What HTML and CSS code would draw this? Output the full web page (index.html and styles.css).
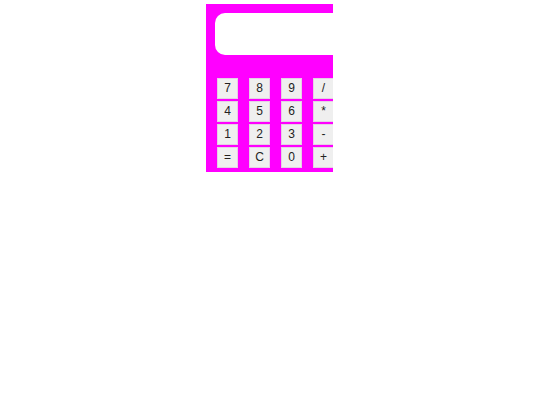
FILE: index.html
```html
<!DOCTYPE html>
<html>
<head>
<meta charset="utf-8">
<link rel="stylesheet" href="styles.css">
</head>
<body>
<div class="calc">
  <div class="display"></div>
  <div class="keys">
    <button class="key">7</button>
    <button class="key">8</button>
    <button class="key">9</button>
    <button class="key">/</button>
    <button class="key">4</button>
    <button class="key">5</button>
    <button class="key">6</button>
    <button class="key">*</button>
    <button class="key">1</button>
    <button class="key">2</button>
    <button class="key">3</button>
    <button class="key">-</button>
    <button class="key">=</button>
    <button class="key">C</button>
    <button class="key">0</button>
    <button class="key">+</button>
  </div>
</div>
</body>
</html>
```
FILE: styles.css
```css
html, body {
  margin: 0;
  padding: 0;
  background: #ffffff;
}
.calc {
  width: 118px;
  margin: 4px 0 0 206px;
  padding: 9px 0 4px 9px;
  background: #ff00ff;
  overflow: hidden;
}
.display {
  width: 140px;
  height: 42px;
  background: #ffffff;
  border-radius: 10px;
}
.keys {
  margin-top: 23px;
  display: grid;
  grid-template-columns: repeat(4, 21px);
  grid-auto-rows: 21px;
  column-gap: 11px;
  row-gap: 2px;
  padding-left: 2px;
}
.key {
  margin: 0;
  padding: 0;
  width: 21px;
  height: 21px;
  box-sizing: border-box;
  background: #efefef;
  border: 1px solid #e6cfe6;
  font-family: "Liberation Sans", Arial, sans-serif;
  font-size: 12px;
  color: #222222;
  line-height: 19px;
  text-align: center;
}
```
